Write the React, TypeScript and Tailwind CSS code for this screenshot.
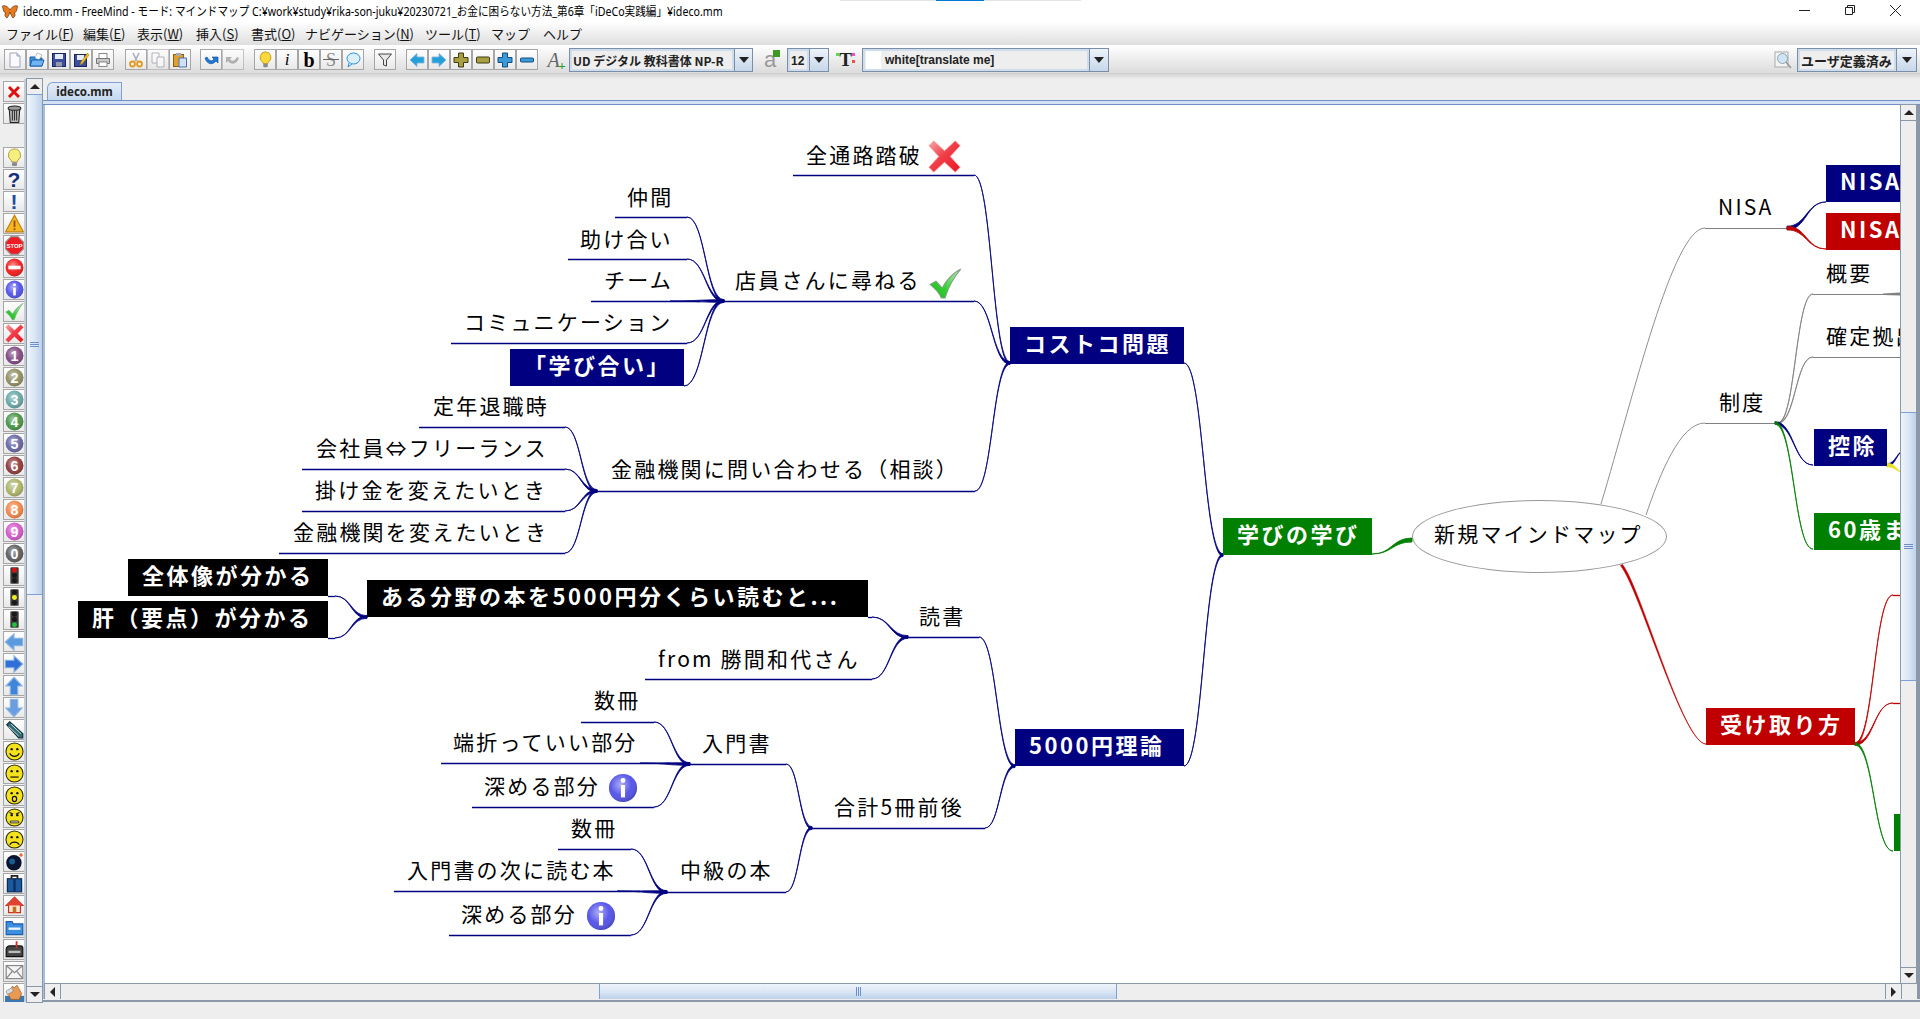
import { useId, type ReactNode } from "react";

const NAVY = "#000080";
const RED = "#c00000";
const GREEN = "#008000";
const GRAY = "#808080";

// map canvas sits at this page offset, all map data below is in page pixels
const OX = 45;
const OY = 105;

function Ico({ children, s = 16 }: { children: ReactNode; s?: number }) {
  return (
    <svg width={s} height={s} viewBox="0 0 16 16">
      {children}
    </svg>
  );
}

function Ball({ c, children, s = 19 }: { c: string; children?: ReactNode; s?: number }) {
  const id = useId();
  return (
    <svg width={s} height={s} viewBox="0 0 16 16">
      <defs>
        <radialGradient id={id} cx="0.42" cy="0.38" r="0.7">
          <stop offset="0" stopColor="#ffffff" stopOpacity="0.55" />
          <stop offset="0.55" stopColor="#ffffff" stopOpacity="0.08" />
          <stop offset="1" stopColor="#000000" stopOpacity="0.3" />
        </radialGradient>
      </defs>
      <circle cx="8" cy="8" r="7.5" fill={c} />
      <circle cx="8" cy="8" r="7.5" fill={`url(#${id})`} />
      {children}
    </svg>
  );
}

function Num({ c, n }: { c: string; n: string }) {
  return (
    <Ball c={c}>
      <text x="8" y="12.4" textAnchor="middle" fontSize="12" fontWeight="700" fill="#fff" fontFamily="Liberation Sans, sans-serif">
        {n}
      </text>
    </Ball>
  );
}

function Face({ mouth, brow }: { mouth: ReactNode; brow?: boolean }) {
  return (
    <svg width="19" height="19" viewBox="0 0 16 16">
      <circle cx="8" cy="8" r="7.2" fill="#f4e21c" stroke="#2a2a00" strokeWidth="0.9" />
      <circle cx="5.6" cy="6" r="1" fill="#111" />
      <circle cx="10.4" cy="6" r="1" fill="#111" />
      {brow && <path d="M3.8 3.8l3 1.3M12.2 3.8l-3 1.3" stroke="#111" strokeWidth="1" fill="none" />}
      {mouth}
    </svg>
  );
}

function BigX({ s = 19 }: { s?: number }) {
  const id = useId();
  return (
    <svg width={s} height={s} viewBox="0 0 16 16">
      <defs>
        <linearGradient id={id} x1="0" y1="0" x2="1" y2="1">
          <stop offset="0" stopColor="#f7a8a8" />
          <stop offset="0.45" stopColor="#f0404a" />
          <stop offset="1" stopColor="#ee1020" />
        </linearGradient>
      </defs>
      <path d="M.4 2.800L2.800.4 8 5.200 13.200.4l2.400 2.400L10.800 8l4.800 5.200-2.400 2.400L8 10.800l-5.200 4.800-2.400-2.400L5.200 8z" fill={`url(#${id})`} stroke="#f3b0b0" strokeWidth="0.4" />
    </svg>
  );
}

function Check({ s = 19 }: { s?: number }) {
  const id = useId();
  return (
    <svg width={s} height={s} viewBox="0 0 16 16">
      <defs>
        <linearGradient id={id} x1="1" y1="0" x2="0" y2="1">
          <stop offset="0" stopColor="#cfe8cf" />
          <stop offset="0.6" stopColor="#30d030" />
          <stop offset="1" stopColor="#20b020" />
        </linearGradient>
      </defs>
      <path d="M.6 8.500l2.800-1.600 3 3.300C8.500 6.300 11 3.300 15.400 1c-3 3.500-6 8.500-7.600 14H6C5 12.500 3 10.500.6 8.500z" fill={`url(#${id})`} stroke="#7f9f7f" strokeWidth="0.5" />
    </svg>
  );
}

function Info({ s = 19 }: { s?: number }) {
  return (
    <Ball c="#4a4ae8" s={s}>
      <circle cx="8" cy="4" r="1.300" fill="#fff" />
      <rect x="6.900" y="6.400" width="2.200" height="6.600" fill="#fff" />
    </Ball>
  );
}

function Arrow({ d, fill = "#2b7fd8", s = 20 }: { d: "l" | "r" | "u" | "d"; fill?: string; s?: number }) {
  const rot = { l: 0, r: 180, u: 90, d: 270 }[d];
  return (
    <svg width={s} height={s} viewBox="0 0 16 16">
      <path
        d="M1 8l7-6.500V5h7v6H8v3.500z"
        fill={fill}
        stroke="#8cb4e0"
        strokeWidth="0.9"
        transform={`rotate(${rot} 8 8)`}
      />
    </svg>
  );
}

function Cross({ c, edge, minus, thin }: { c: string; edge: string; minus?: boolean; thin?: boolean }) {
  if (minus)
    return (
      <Ico>
        <rect x="1.500" y={thin ? 6 : 5} width="13" height={thin ? 4 : 6} rx="1" fill={c} stroke={edge} />
      </Ico>
    );
  return (
    <Ico>
      <path d="M5.500 1h5v4.500H15v5h-4.500V15h-5v-4.500H1v-5h4.500z" fill={c} stroke={edge} />
    </Ico>
  );
}

function Bulb({ s = 17, c = "#ffd83a" }: { s?: number; c?: string }) {
  return (
    <svg width={s} height={s} viewBox="0 0 16 16">
      <path d="M8 .8a5.200 5.200 0 0 0-3 9.400c.5.400.7 1 .7 1.600h4.600c0-.6.2-1.200.7-1.600A5.200 5.200 0 0 0 8 .8z" fill={c} stroke="#a88a20" strokeWidth="0.7" />
      <rect x="5.900" y="12" width="4.200" height="3.200" rx="0.8" fill="#8a8a8a" />
    </svg>
  );
}

function Btn({ children, off }: { children: ReactNode; off?: boolean }) {
  return (
    <div
      className={`flex h-[21px] w-[22px] shrink-0 items-center justify-center border border-[#a6a6a6] bg-gradient-to-b from-white to-[#e8e8e8] ${
        off ? "opacity-60" : ""
      }`}
    >
      {children}
    </div>
  );
}

function Combo({ w, arrow = 18, children }: { w: string; arrow?: number; children: ReactNode }) {
  return (
    <div className={`flex h-[24px] shrink-0 border border-[#7a8ea8] bg-[#eeeeee] ${w}`}>
      <div className="min-w-0 flex-1 overflow-hidden whitespace-nowrap border-2 border-[#cfdcec] text-[12px] font-bold leading-[20px] text-[#222]">
        {children}
      </div>
      <div
        className="flex items-center justify-center border-l border-[#7a8ea8] bg-gradient-to-b from-[#eef3f9] to-[#c6d7ea]"
        style={{ width: arrow }}
      >
        <span className="h-0 w-0 border-x-[5px] border-t-[6px] border-x-transparent border-t-[#222]" />
      </div>
    </div>
  );
}

const menus = [
  ["ファイル", "F", "w-[77px]"],
  ["編集", "E", "w-[54px]"],
  ["表示", "W", "w-[59px]"],
  ["挿入", "S", "w-[55px]"],
  ["書式", "O", "w-[54px]"],
  ["ナビゲーション", "N", "w-[120px]"],
  ["ツール", "T", "w-[66px]"],
  ["マップ", "", "w-[52px]"],
  ["ヘルプ", "", "w-[50px]"],
];

function TopToolbar() {
  return (
    <div className="flex h-[29px] items-center border-b border-[#cfcfcf] bg-gradient-to-b from-white to-[#dcdcdc] pl-[4px] pt-[1px]">
      <Btn>
        <Ico>
          <path d="M3 1h7l3 3v11H3z" fill="#fbfbff" stroke="#9aa4b8" />
          <path d="M10 1v3h3" fill="#dde" stroke="#9aa4b8" />
        </Ico>
      </Btn>
      <Btn>
        <Ico>
          <path d="M1 5h5l1 1h6v8H1z" fill="#3b8ee0" stroke="#1d5ea8" />
          <path d="M8 1l5 2-3 5-4-2z" fill="#fff" stroke="#789" strokeWidth="0.5" />
          <path d="M3 8h12l-2 6H1z" fill="#6fb3f0" stroke="#1d5ea8" />
        </Ico>
      </Btn>
      <Btn>
        <Ico>
          <rect x="1.500" y="1.500" width="13" height="13" fill="#3c4f9c" stroke="#1a2560" />
          <rect x="4" y="2" width="8" height="5" fill="#e8ecf8" />
          <rect x="5" y="10" width="6" height="4.500" fill="#99a" />
        </Ico>
      </Btn>
      <Btn>
        <Ico>
          <rect x="1.500" y="2.500" width="12" height="12" fill="#3c4f9c" stroke="#1a2560" />
          <rect x="4" y="3" width="7" height="5" fill="#e8ecf8" />
          <path d="M14.500 1L8 10l-1 3 2.500-1.500L16 3z" fill="#f0c020" stroke="#a07000" strokeWidth="0.5" />
        </Ico>
      </Btn>
      <Btn>
        <Ico>
          <rect x="4" y="1.500" width="8" height="5" fill="#fff" stroke="#888" />
          <path d="M1.500 6.500h13v5h-13z" fill="#c8c8c8" stroke="#777" />
          <rect x="4" y="10" width="8" height="4.500" fill="#fff" stroke="#888" />
        </Ico>
      </Btn>
      <div className="w-[11px] shrink-0" />
      <Btn>
        <Ico>
          <path d="M5 1l4 8M11 1L7 9" stroke="#aab" strokeWidth="1.500" />
          <circle cx="4.500" cy="12" r="2.500" fill="none" stroke="#e09a20" strokeWidth="1.800" />
          <circle cx="11.500" cy="12" r="2.500" fill="none" stroke="#e09a20" strokeWidth="1.800" />
        </Ico>
      </Btn>
      <Btn off>
        <Ico>
          <path d="M2 1h7v10H2z" fill="#fff" stroke="#889" />
          <path d="M7 5h7v10H7z" fill="#fff" stroke="#889" />
        </Ico>
      </Btn>
      <Btn>
        <Ico>
          <rect x="1.500" y="2.500" width="10" height="12" fill="#e0a030" stroke="#8a6010" />
          <rect x="4" y="1" width="5" height="3" fill="#aaa" />
          <path d="M7 6h7.500v9H7z" fill="#cfe0f8" stroke="#4a70b0" />
        </Ico>
      </Btn>
      <div className="w-[9px] shrink-0" />
      <Btn>
        <Ico>
          <path d="M2 6c2 7 8 7 11 3l2 2V5H9l2 2c-2 3-5 2-7-2z" fill="#1f78d8" stroke="#0c4a98" strokeWidth="0.6" />
        </Ico>
      </Btn>
      <Btn off>
        <Ico>
          <path d="M14 6c-2 7-8 7-11 3l-2 2V5h6L5 7c2 3 5 2 7-2z" fill="#8a8a8a" />
        </Ico>
      </Btn>
      <div className="w-[10px] shrink-0" />
      <Btn>
        <Bulb />
      </Btn>
      <Btn>
        <span className="font-['Liberation_Serif',serif] text-[17px] italic leading-none text-black">i</span>
      </Btn>
      <Btn>
        <span className="font-['Liberation_Serif',serif] text-[20px] font-bold leading-none text-black">b</span>
      </Btn>
      <Btn>
        <span className="relative font-['Liberation_Serif',serif] text-[18px] leading-none text-[#888]">
          S
          <span className="absolute left-[-3px] right-[-3px] top-[8px] h-[1px] bg-[#666]" />
        </span>
      </Btn>
      <Btn>
        <Ico>
          <ellipse cx="8.500" cy="6.500" rx="6.500" ry="5.500" fill="#dcefff" stroke="#2b8fd8" />
          <path d="M4 11l-1 4 4-3" fill="#dcefff" stroke="#2b8fd8" />
        </Ico>
      </Btn>
      <div className="w-[10px] shrink-0" />
      <Btn>
        <Ico>
          <path d="M1.500 2h13L9.500 8v6l-3-1V8z" fill="#e8e8e8" stroke="#444" />
        </Ico>
      </Btn>
      <div className="w-[10px] shrink-0" />
      <Btn>
        <Arrow d="l" fill="#22a0d8" s={16} />
      </Btn>
      <Btn>
        <Arrow d="r" fill="#22a0d8" s={16} />
      </Btn>
      <Btn>
        <Cross c="#a8a040" edge="#3c3c10" />
      </Btn>
      <Btn>
        <Cross c="#a8a040" edge="#3c3c10" minus />
      </Btn>
      <Btn>
        <Cross c="#3c9ad8" edge="#0f4f80" />
      </Btn>
      <Btn>
        <Cross c="#3c9ad8" edge="#0f4f80" minus thin />
      </Btn>
      <div className="flex w-[31px] shrink-0 items-center justify-center">
        <span className="relative font-['Liberation_Serif',serif] text-[20px] italic leading-none text-[#666]">
          A
          <span className="absolute bottom-[-2px] right-[-6px] text-[13px] font-bold not-italic leading-none text-[#20a020]">+</span>
        </span>
      </div>
      <Combo w="w-[184px]">
        <span className="pl-[1px] font-['Noto_Sans_CJK_JP',sans-serif]">UD デジタル 教科書体 NP-R</span>
      </Combo>
      <div className="flex w-[34px] shrink-0 items-center justify-center">
        <span className="relative font-['Liberation_Sans',sans-serif] text-[22px] leading-none text-[#999]">
          a
          <span className="absolute right-[-4px] top-[1px] h-[7px] w-[7px] bg-[#3c9a20]" />
        </span>
      </div>
      <Combo w="w-[42px]" arrow={19}>
        <span className="pl-[1px] font-['Liberation_Sans',sans-serif]">12</span>
      </Combo>
      <div className="flex w-[33px] shrink-0 items-center justify-center">
        <span className="relative font-['Liberation_Serif',serif] text-[19px] font-bold leading-none text-[#222]">
          T
          <span className="absolute left-[-3px] top-[3px] h-[3px] w-[3px] bg-[#50e050]" />
          <span className="absolute right-[-3px] top-[3px] h-[3px] w-[3px] bg-[#f050c0]" />
          <span className="absolute right-[-3px] top-[10px] h-[3px] w-[3px] bg-[#f05050]" />
        </span>
      </div>
      <Combo w="w-[247px]" arrow={19}>
        <div className="flex h-full items-center">
          <span className="ml-[1px] h-[18px] w-[15px] bg-white" />
          <span className="ml-[4px] font-['Liberation_Sans',sans-serif]">white[translate me]</span>
        </div>
      </Combo>
      <div className="flex-1" />
      <svg width="18" height="18" viewBox="0 0 18 18" className="mr-[5px] shrink-0">
        <rect x="1" y="1" width="13" height="15" fill="#f4f4f4" stroke="#aaa" />
        <circle cx="8.500" cy="7.500" r="5" fill="#cfe4f5" stroke="#8aa" />
        <path d="M12 11l5 6" stroke="#999" strokeWidth="1.500" />
      </svg>
      <Combo w="w-[120px] mr-[3px]" arrow={20}>
        <span className="pl-[1px] font-['Noto_Sans_CJK_JP',sans-serif] text-[13px]">ユーザ定義済み</span>
      </Combo>
    </div>
  );
}

const sideIcons: ReactNode[] = [
  <Bulb s={19} c="#f4f080" />,
  <span className="font-['Liberation_Sans',sans-serif] text-[21px] font-bold leading-none text-[#16307a]">?</span>,
  <span className="font-['Liberation_Sans',sans-serif] text-[21px] font-bold leading-none text-[#1f4fa0]">!</span>,
  <svg width="19" height="19" viewBox="0 0 16 16">
    <path d="M8 1l7.500 14H.5z" fill="#f5b820" stroke="#c08010" />
    <rect x="7.200" y="5.500" width="1.600" height="5.500" fill="#a05000" />
    <rect x="7.200" y="12" width="1.600" height="1.600" fill="#a05000" />
  </svg>,
  <svg width="19" height="19" viewBox="0 0 16 16">
    <path d="M5 .5h6L15.500 5v6L11 15.500H5L.5 11V5z" fill="#ee1c24" stroke="#999" />
    <text x="8" y="10" textAnchor="middle" fontSize="5" fontWeight="700" fill="#fff" fontFamily="Liberation Sans, sans-serif">
      STOP
    </text>
  </svg>,
  <Ball c="#f01010">
    <rect x="2.800" y="6.500" width="10.400" height="3" fill="#fff" />
  </Ball>,
  <Info />,
  <Check />,
  <BigX />,
  <Num c="#7b3f7b" n="1" />,
  <Num c="#8a8a5a" n="2" />,
  <Num c="#5fa3a3" n="3" />,
  <Num c="#3f8f3f" n="4" />,
  <Num c="#5f5f9f" n="5" />,
  <Num c="#8b2f2f" n="6" />,
  <Num c="#a8b060" n="7" />,
  <Num c="#f08040" n="8" />,
  <Num c="#d050c8" n="9" />,
  <Num c="#555555" n="0" />,
  ...["#e01010", "#f0f020", "#20c040"].map((c, i) => (
    <svg key={c} width="19" height="19" viewBox="0 0 16 16">
      <rect x="4.500" y="1" width="7" height="14" rx="1" fill="#3a3a3a" />
      {[3.500, 8, 12.500].map((cy, j) => (
        <circle key={cy} cx="8" cy={cy} r="2.100" fill={i === j ? c : "#181818"} />
      ))}
    </svg>
  )),
  <Arrow d="l" fill="#5c9ae0" />,
  <Arrow d="r" fill="#2f6fd8" />,
  <Arrow d="u" fill="#3f85dc" />,
  <Arrow d="d" fill="#6a9ee0" />,
  <svg width="19" height="19" viewBox="0 0 16 16">
    <path d="M1.500 4L4 1.500l11 10v3.500h-3.500z" fill="#3a6a7a" stroke="#12303a" />
    <path d="M3 5.500l8.500 8M5 3.500l8.500 8" stroke="#cfe" strokeWidth="0.7" />
  </svg>,
  <Face mouth={<path d="M4 9.500c1.500 3.500 6.500 3.500 8 0" stroke="#111" fill="none" />} />,
  <Face mouth={<path d="M4.500 11h7" stroke="#111" />} />,
  <Face mouth={<ellipse cx="8" cy="11" rx="1.800" ry="2.200" fill="none" stroke="#111" />} />,
  <Face brow mouth={<path d="M4.500 11h7v1.500h-7z" fill="#fff" stroke="#111" strokeWidth="0.7" />} />,
  <Face mouth={<path d="M4 12.500c1.500-3 6.500-3 8 0" stroke="#111" fill="none" />} />,
  <svg width="19" height="19" viewBox="0 0 16 16">
    <circle cx="7.500" cy="9" r="6.500" fill="#0a1430" />
    <circle cx="6" cy="8" r="2.500" fill="#1a5a90" />
    <circle cx="13.500" cy="2.500" r="1.500" fill="#e86a30" />
  </svg>,
  <svg width="19" height="19" viewBox="0 0 16 16">
    <rect x="2" y="4" width="12" height="11" fill="#1a5aa0" stroke="#102a50" />
    <path d="M5.500 4V1.500h5V4" fill="none" stroke="#222" strokeWidth="1.500" />
    <rect x="7" y="4" width="2" height="11" fill="#0d3060" />
  </svg>,
  <svg width="19" height="19" viewBox="0 0 16 16">
    <path d="M8 1L1 8h2v6h10V8h2z" fill="#f6e8d0" stroke="#d03020" />
    <path d="M8 1L1 8h14z" fill="#e04030" />
    <rect x="6.500" y="9" width="3" height="5" fill="#c07020" />
  </svg>,
  <svg width="19" height="19" viewBox="0 0 16 16">
    <path d="M1 3h5l1 2h8v9H1z" fill="#3b8ee0" stroke="#1d5ea8" />
    <rect x="3" y="8" width="10" height="2" fill="#e8f3ff" />
  </svg>,
  <svg width="19" height="19" viewBox="0 0 16 16">
    <path d="M1 8a3 3 0 0 1 3-3h9a2 2 0 0 1 2 2v7H1z" fill="#444" stroke="#111" />
    <rect x="9" y="1" width="1.500" height="6" fill="#d03020" />
    <rect x="3" y="9" width="10" height="2" fill="#bbb" />
  </svg>,
  <svg width="19" height="19" viewBox="0 0 16 16">
    <rect x="1" y="3" width="14" height="11" fill="#f4f4f4" stroke="#888" />
    <path d="M1 3l7 6 7-6M1 14l5-6M15 14l-5-6" fill="none" stroke="#888" />
  </svg>,
  <svg width="19" height="19" viewBox="0 0 16 16">
    <rect x="0" y="10" width="16" height="6" fill="#3a78b0" />
    <path d="M3 9l3-7 2 1 2-2 4 7-2 5H5z" fill="#e89a50" stroke="#a05a20" strokeWidth="0.6" />
    <path d="M1 6l5-3 1 3-5 3z" fill="#ddd" stroke="#777" strokeWidth="0.5" />
  </svg>,
];

function SideToolbar() {
  return (
    <div className="flex h-full w-[26px] shrink-0 flex-col overflow-hidden border-r-2 border-[#c4ccd6] bg-[#eeeeee] pl-[3px] pt-[2px]">
      <div className="mb-[1px]">
        <Btn>
          <svg width="14" height="14" viewBox="0 0 14 14">
            <path d="M2 2l10 10M12 2L2 12" stroke="#e01010" strokeWidth="3" />
          </svg>
        </Btn>
      </div>
      <div className="mb-[23px]">
        <Btn>
          <svg width="17" height="20" viewBox="0 0 16 18">
            <path d="M3 4l1 13h8l1-13z" fill="#b8b8b8" stroke="#222" />
            <ellipse cx="8" cy="3.500" rx="6" ry="2" fill="#999" stroke="#222" />
            <path d="M6 6v9M8 6v9M10 6v9" stroke="#333" />
          </svg>
        </Btn>
      </div>
      {sideIcons.map((ic, i) => (
        <div key={i} className="mb-[1px] shrink-0">
          <Btn>{ic}</Btn>
        </div>
      ))}
    </div>
  );
}

function ScrollBtn({ d }: { d: "u" | "d" | "l" | "r" }) {
  const tri = {
    u: "border-x-[5px] border-b-[5px] border-x-transparent border-b-[#222]",
    d: "border-x-[5px] border-t-[5px] border-x-transparent border-t-[#222]",
    l: "border-y-[5px] border-r-[5px] border-y-transparent border-r-[#222]",
    r: "border-y-[5px] border-l-[5px] border-y-transparent border-l-[#222]",
  }[d];
  return (
    <div className="flex h-[15px] w-[15px] shrink-0 items-center justify-center bg-[#eeeeee] outline outline-1 outline-[#8a98a8]">
      <span className={`h-0 w-0 ${tri}`} />
    </div>
  );
}

function VGrip() {
  return (
    <div className="flex w-[9px] flex-col gap-[1px]">
      <span className="h-[1px] bg-[#6f8fc8]" />
      <span className="h-[1px] bg-[#6f8fc8]" />
      <span className="h-[1px] bg-[#6f8fc8]" />
    </div>
  );
}

function VScroll({ before, thumb, after }: { before: string; thumb: string; after: string }) {
  return (
    <div className="flex h-full w-[15px] shrink-0 flex-col border-x border-[#8a98a8] bg-[#eeeeee] box-content">
      <ScrollBtn d="u" />
      <div className={before} />
      <div className={`flex shrink-0 items-center justify-center border-y border-[#7f9fd8] bg-gradient-to-r from-[#eef4fb] via-[#dbe7f5] to-[#bcd2ea] ${thumb}`}>
        <VGrip />
      </div>
      <div className={after} />
      <ScrollBtn d="d" />
    </div>
  );
}

type Pt = [number, number];

// tapered bezier like freemind's sharp edges: wide at the parent end, thin at the child end
function edge(a: Pt, b: Pt, w = 1.3) {
  const m = (a[0] + b[0]) / 2;
  return `M${a[0]} ${a[1] - w}C${m} ${a[1] - w} ${m} ${b[1]} ${b[0]} ${b[1]}C${m} ${b[1]} ${m} ${a[1] + w} ${a[0]} ${a[1] + w}Z`;
}

const edges: [Pt, Pt, string, number?][] = [
  [[1223, 555], [1184, 363], NAVY],
  [[1223, 555], [1184, 766], NAVY],
  [[1010, 363], [974, 175], NAVY],
  [[1010, 363], [974, 301], NAVY],
  [[1010, 363], [975, 491], NAVY],
  [[724, 301], [687, 217], NAVY],
  [[724, 301], [687, 259], NAVY],
  [[724, 301], [670, 301], NAVY],
  [[724, 301], [687, 343], NAVY],
  [[724, 301], [684, 386], NAVY],
  [[597, 491], [565, 427], NAVY],
  [[597, 491], [565, 469], NAVY],
  [[597, 491], [565, 511], NAVY],
  [[597, 491], [565, 553], NAVY],
  [[367, 617], [335, 596], NAVY],
  [[367, 617], [335, 638], NAVY],
  [[908, 637], [872, 617], NAVY],
  [[908, 637], [872, 679], NAVY],
  [[1015, 766], [979, 637], NAVY],
  [[1015, 766], [985, 828], NAVY],
  [[812, 828], [786, 764], NAVY],
  [[812, 828], [786, 892], NAVY],
  [[690, 764], [654, 722], NAVY],
  [[690, 764], [640, 763], NAVY],
  [[690, 764], [654, 807], NAVY],
  [[667, 892], [631, 849], NAVY],
  [[667, 892], [617, 891], NAVY],
  [[667, 892], [631, 935], NAVY],
  [[1412, 540], [1372, 554], GREEN, 2],
  [[1787, 228], [1826, 202], NAVY, 1.8],
  [[1787, 228], [1826, 249], RED, 1.8],
  [[1778, 423], [1813, 294], GRAY, 0.5],
  [[1778, 423], [1813, 357], GRAY, 0.5],
  [[1775, 423], [1813, 465], NAVY],
  [[1775, 423], [1813, 549], GREEN],
  [[1855, 744], [1893, 595], RED],
  [[1855, 744], [1893, 703], RED],
  [[1855, 744], [1893, 851], GREEN],
  [[1887, 465], [1906, 450], NAVY],
  [[1887, 465], [1906, 473], "#e8e020", 1.8],
];

const stubs: [number, number, number, string][] = [
  [793, 974, 175, NAVY],
  [615, 687, 217, NAVY],
  [568, 687, 259, NAVY],
  [591, 700, 301, NAVY],
  [451, 687, 343, NAVY],
  [724, 974, 301, NAVY],
  [597, 975, 491, NAVY],
  [419, 565, 427, NAVY],
  [302, 565, 469, NAVY],
  [302, 565, 511, NAVY],
  [279, 565, 553, NAVY],
  [328, 335, 596, NAVY],
  [328, 335, 638, NAVY],
  [868, 872, 617, NAVY],
  [645, 872, 679, NAVY],
  [908, 979, 637, NAVY],
  [812, 985, 828, NAVY],
  [690, 786, 764, NAVY],
  [667, 786, 892, NAVY],
  [581, 654, 722, NAVY],
  [441, 670, 763, NAVY],
  [472, 654, 807, NAVY],
  [558, 631, 849, NAVY],
  [394, 640, 891, NAVY],
  [449, 631, 935, NAVY],
  [1705, 1787, 228, GRAY],
  [1705, 1778, 423, GRAY],
  [1813, 1900, 294, GRAY],
  [1813, 1900, 357, GRAY],
  [1893, 1900, 595, RED],
  [1893, 1900, 703, RED],
];

// plain text nodes: x of the first glyph, y of the text middle
const labels: [number, number, string][] = [
  [806, 154, "全通路踏破"],
  [627, 196, "仲間"],
  [580, 238, "助け合い"],
  [604, 279, "チーム"],
  [464, 321, "コミュニケーション"],
  [735, 279, "店員さんに尋ねる"],
  [611, 468, "金融機関に問い合わせる（相談）"],
  [433, 405, "定年退職時"],
  [316, 447, "会社員⇔フリーランス"],
  [315, 489, "掛け金を変えたいとき"],
  [293, 531, "金融機関を変えたいとき"],
  [919, 615, "読書"],
  [658, 658, "from 勝間和代さん"],
  [594, 699, "数冊"],
  [453, 741, "端折っていい部分"],
  [484, 785, "深める部分"],
  [702, 742, "入門書"],
  [834, 806, "合計5冊前後"],
  [571, 827, "数冊"],
  [407, 869, "入門書の次に読む本"],
  [461, 913, "深める部分"],
  [680, 869, "中級の本"],
  [1434, 533, "新規マインドマップ"],
  [1718, 206, "NISA"],
  [1719, 401, "制度"],
  [1826, 272, "概要"],
  [1826, 335, "確定拠出年金"],
];

// filled nodes: left, top, right, bottom, colour, text
const boxes: [number, number, number, number, string, string][] = [
  [510, 349, 684, 386, "bg-[#000080]", "「学び合い」"],
  [1010, 327, 1184, 364, "bg-[#000080]", "コストコ問題"],
  [1015, 729, 1184, 766, "bg-[#000080]", "5000円理論"],
  [1223, 518, 1372, 555, "bg-[#008000]", "学びの学び"],
  [128, 559, 328, 596, "bg-black", "全体像が分かる"],
  [78, 601, 328, 638, "bg-black", "肝（要点）が分かる"],
  [367, 580, 868, 617, "bg-black", "ある分野の本を5000円分くらい読むと..."],
  [1826, 165, 1920, 202, "bg-[#000080]", "NISA"],
  [1826, 213, 1920, 250, "bg-[#c00000]", "NISA"],
  [1814, 429, 1887, 466, "bg-[#000080]", "控除"],
  [1814, 513, 1960, 550, "bg-[#008000]", "60歳まで"],
  [1706, 708, 1855, 745, "bg-[#c00000]", "受け取り方"],
  [1894, 814, 1960, 851, "bg-[#008000]", ""],
];

const nodeIcons: [number, number, number, ReactNode][] = [
  [928, 140, 33, <BigX s={33} />],
  [929, 267, 33, <Check s={33} />],
  [608, 773, 30, <Info s={30} />],
  [586, 901, 30, <Info s={30} />],
];

function MindMap() {
  return (
    <div className="relative min-w-0 flex-1 overflow-hidden bg-white font-['Noto_Sans_CJK_JP',sans-serif]">
      {/* ellipse root sits under the edges */}
      <div
        className="absolute rounded-[50%] border border-[#999999] bg-white"
        style={{ left: 1412 - OX, top: 500 - OY, width: 255, height: 73 }}
      />
      <svg className="absolute left-0 top-0" width={1855} height={878} viewBox={`${OX} ${OY} 1855 878`}>
        {stubs.map(([x1, x2, y, c]) => (
          <line key={`${x1}-${y}`} x1={x1} x2={x2} y1={y + 0.5} y2={y + 0.5} stroke={c} strokeWidth={c === GRAY ? 1 : 1.300} />
        ))}
        {edges.map(([a, b, c, w], i) => (
          <path key={i} d={edge(a, b, w)} fill={c} stroke={c} strokeWidth="0.8" />
        ))}
        {/* root edges leave the ellipse at an angle, not level */}
        <path d="M1601 504C1634 394 1673 228 1705 228" fill="none" stroke="#909090" strokeWidth="1" />
        <path d="M1646 515C1660 474 1680 423 1705 423" fill="none" stroke="#909090" strokeWidth="1" />
        <path d="M1620.500 565.500C1640 590 1683 744 1706 744C1683 744 1642 590 1622.500 564.500Z" fill={RED} stroke={RED} strokeWidth="0.6" />
        <path d="M1883 293.500L1900 292.500v3L1883 295z" fill={GRAY} />
      </svg>
      {boxes.map(([l, t, r, b, bg, text]) => (
        <div
          key={`${l}-${t}`}
          className={`absolute whitespace-nowrap pl-[14px] text-[22px] font-bold leading-[31px] tracking-[2.5px] text-white ${bg}`}
          style={{ left: l - OX, top: t - OY, width: r - l, height: b - t }}
        >
          {text}
        </div>
      ))}
      {labels.map(([x, y, text]) => (
        <div
          key={`${x}-${y}`}
          className="absolute whitespace-nowrap text-[21px] leading-[30px] tracking-[2.2px] text-black"
          style={{ left: x - OX, top: y - OY - 15 }}
        >
          {text}
        </div>
      ))}
      {nodeIcons.map(([x, y, s, ic]) => (
        <div key={`${x}-${y}`} className="absolute" style={{ left: x - OX, top: y - OY, width: s, height: s }}>
          {ic}
        </div>
      ))}
    </div>
  );
}

export default function App() {
  return (
    <div className="flex h-[1019px] w-[1920px] flex-col overflow-hidden bg-[#eeeeee] font-['Noto_Sans','Noto_Sans_CJK_JP',sans-serif] text-black">
      {/* title bar */}
      <div className="relative flex h-[22px] shrink-0 items-center bg-white pl-[2px] text-[12px]">
        <div className="absolute left-[840px] top-0 h-[1px] w-[241px] bg-[#e4e4e4]">
          <div className="ml-[96px] h-[1px] w-[48px] bg-[#0078d7]" />
        </div>
        <svg width="16" height="14" viewBox="0 0 16 14" className="mr-[5px] mt-[2px]">
          <path d="M8 5C6 1 2 0 .5 1 1 5 2 8 4 8c-2 1-1 4 1 5 1-1 2-3 3-6 1 3 2 5 3 6 2-1 3-4 1-5 2 0 3-3 3.500-7C14 0 10 1 8 5z" fill="#e87a1c" stroke="#4a2000" strokeWidth="0.6" />
        </svg>
        <span className="origin-left scale-x-[0.885] whitespace-nowrap pt-[2px]">ideco.mm - FreeMind - モード: マインドマップ C:¥work¥study¥rika-son-juku¥20230721_お金に困らない方法_第6章「iDeCo実践編」¥ideco.mm</span>
        <svg width="120" height="14" viewBox="0 0 120 14" className="absolute right-[12px] top-[3px]">
          <path d="M11 7.500h11" stroke="#222" />
          <path d="M57.500 4.500h7v7h-7zM59.500 4.500v-2h7v7h-2" fill="none" stroke="#222" />
          <path d="M102 2l11 11M113 2L102 13" stroke="#222" />
        </svg>
      </div>

      {/* menu bar */}
      <div className="flex h-[23px] shrink-0 items-center bg-gradient-to-b from-white to-[#dedede] pl-[6px] font-['Noto_Sans_CJK_JP',sans-serif] text-[13px] text-[#111]">
        {menus.map(([m, k, w]) => (
          <span key={m} className={`shrink-0 whitespace-nowrap ${w}`}>
            {m}
            {k && (
              <>
                (<span className="underline">{k}</span>)
              </>
            )}
          </span>
        ))}
      </div>

      <TopToolbar />
      <div className="h-[5px] shrink-0 bg-gradient-to-b from-[#d4d4d4] to-[#eeeeee]" />

      {/* main area */}
      <div className="flex h-[923px] shrink-0">
        <SideToolbar />
        <VScroll before="hidden" thumb="h-[501px] flex-none" after="flex-1" />
        <div className="flex min-w-0 flex-1 flex-col">
          {/* tab strip */}
          <div className="flex h-[21px] shrink-0 items-end pl-[4px]">
            <div className="flex h-[18px] w-[75px] items-center justify-center rounded-tl-[6px] border-x border-t border-[#7f9fd8] bg-gradient-to-b from-[#e4edf7] to-[#c6d9ef] text-[11.500px] font-bold text-[#222]">
              ideco.mm
            </div>
          </div>
          <div className="h-[5px] shrink-0 border-y border-[#6f8fc8] bg-[#d4e1f2]" />
          <div className="flex min-h-0 flex-1 border-l-2 border-[#a8bede] border-r-[3px] border-r-[#8a98a8]">
            <div className="flex min-w-0 flex-1 flex-col">
              <div className="flex min-h-0 flex-1">
                <MindMap />
                <VScroll before="h-[292px] flex-none" thumb="h-[269px] flex-none" after="flex-1" />
              </div>
              {/* horizontal scrollbar */}
              <div className="flex h-[15px] shrink-0 border-t border-[#8a98a8] bg-[#eeeeee] box-content pr-[16px]">
                <ScrollBtn d="l" />
                <div className="w-[539px] shrink-0" />
                <div className="flex w-[518px] shrink-0 items-center justify-center border-x border-[#7f9fd8] bg-gradient-to-b from-[#eef4fb] via-[#dbe7f5] to-[#bcd2ea]">
                  <div className="flex h-[9px] flex-row gap-[1px]">
                    <span className="w-[1px] bg-[#6f8fc8]" />
                    <span className="w-[1px] bg-[#6f8fc8]" />
                    <span className="w-[1px] bg-[#6f8fc8]" />
                  </div>
                </div>
                <div className="flex-1" />
                <ScrollBtn d="r" />
              </div>
            </div>
          </div>
          <div className="h-[3px] shrink-0 border-b-2 border-[#8a98a8] bg-[#eeeeee]" />
        </div>
      </div>
    </div>
  );
}
